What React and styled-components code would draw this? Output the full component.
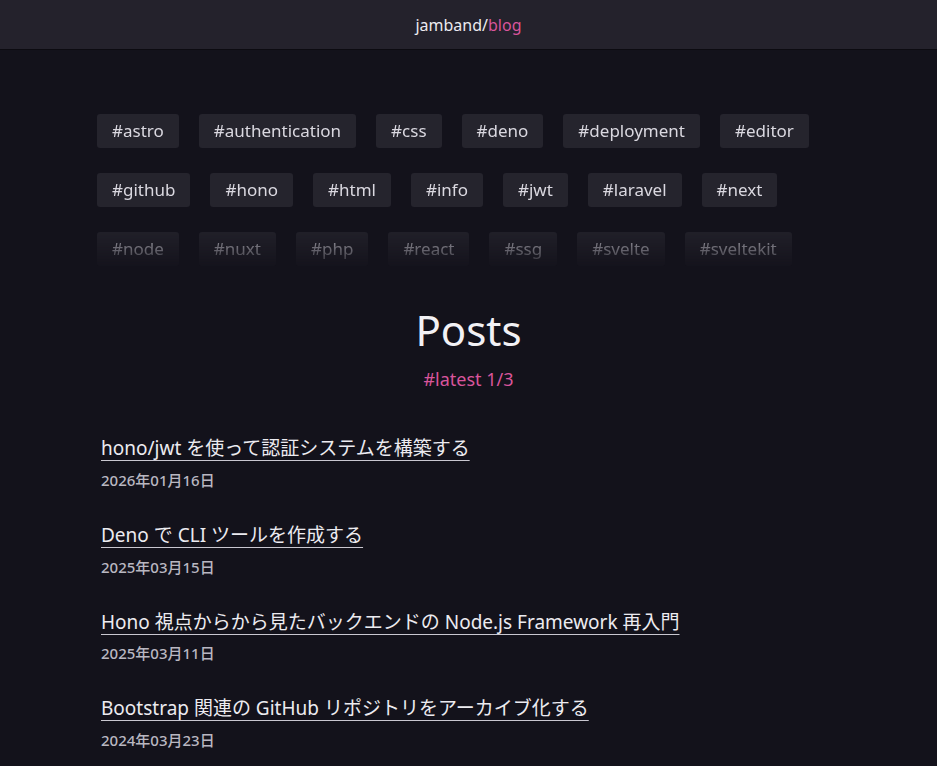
import React from "react";
import styled, { createGlobalStyle } from "styled-components";

const GlobalStyle = createGlobalStyle`
  body {
    margin: 0;
    background: #13121b;
    color: #e8e6ee;
    font-family: "Noto Sans", "Noto Sans CJK JP", sans-serif;
  }
`;

const tags = [
  "astro", "authentication", "css", "deno", "deployment", "editor",
  "github", "hono", "html", "info", "jwt", "laravel", "next",
  "node", "nuxt", "php", "react", "ssg", "svelte", "sveltekit",
];

const posts = [
  { title: "hono/jwt を使って認証システムを構築する", date: "2026年01月16日" },
  { title: "Deno で CLI ツールを作成する", date: "2025年03月15日" },
  { title: "Hono 視点からから見たバックエンドの Node.js Framework 再入門", date: "2025年03月11日" },
  { title: "Bootstrap 関連の GitHub リポジトリをアーカイブ化する", date: "2024年03月23日" },
];

const Header = styled.header`
  height: 49px;
  background: #24222c;
  border-bottom: 1px solid #0c0b11;
  display: flex;
  align-items: center;
  justify-content: center;
  font-size: 16px;
  color: #ecebf0;
  span {
    color: #d9559b;
  }
`;

const Main = styled.main`
  width: 743px;
  margin: 0 auto;
  padding-top: 64px;
`;

const TagCloud = styled.div`
  display: flex;
  flex-wrap: wrap;
  gap: 25px 20px;
  height: 152px;
  overflow: hidden;
  -webkit-mask-image: linear-gradient(to bottom, #000 70%, rgba(0, 0, 0, 0.45) 88%, rgba(0, 0, 0, 0.1) 100%);
  mask-image: linear-gradient(to bottom, #000 70%, rgba(0, 0, 0, 0.45) 88%, rgba(0, 0, 0, 0.1) 100%);
`;

const Tag = styled.a`
  display: flex;
  align-items: center;
  box-sizing: border-box;
  height: 34px;
  padding: 0 15px 1px;
  background: #25242d;
  border-radius: 3px;
  color: #dad8e0;
  font-size: 17px;
  text-decoration: none;
`;

const Heading = styled.h1`
  margin: 39px 0 0;
  text-align: center;
  font-size: 42px;
  font-weight: 400;
  color: #f2f1f5;
  line-height: 1.2;
`;

const SubHeading = styled.p`
  margin: 12px 0 0;
  text-align: center;
  font-size: 18px;
  color: #d9559b;
`;

const PostList = styled.ul`
  list-style: none;
  margin: 44px 0 0;
  padding: 0 0 0 4px;
  display: flex;
  flex-direction: column;
  gap: 32px;
`;

const PostItem = styled.li`
  display: flex;
  flex-direction: column;
  gap: 7px;
`;

const PostTitle = styled.a`
  align-self: flex-start;
  font-size: 19px;
  color: #ecebf0;
  text-decoration: underline;
  text-decoration-thickness: 1px;
  text-underline-offset: 5px;
  text-decoration-color: #c9c7d0;
  line-height: 1.4;
`;

const PostDate = styled.time`
  font-size: 15px;
  font-weight: 500;
  color: #b9b7c1;
`;

export default function App() {
  return (
    <>
      <GlobalStyle />
      <Header>
        jamband/<span>blog</span>
      </Header>
      <Main>
        <TagCloud>
          {tags.map((t) => (
            <Tag key={t} href="#">#{t}</Tag>
          ))}
        </TagCloud>
        <Heading>Posts</Heading>
        <SubHeading>#latest 1/3</SubHeading>
        <PostList>
          {posts.map((p) => (
            <PostItem key={p.title}>
              <PostTitle href="#">{p.title}</PostTitle>
              <PostDate>{p.date}</PostDate>
            </PostItem>
          ))}
        </PostList>
      </Main>
    </>
  );
}
